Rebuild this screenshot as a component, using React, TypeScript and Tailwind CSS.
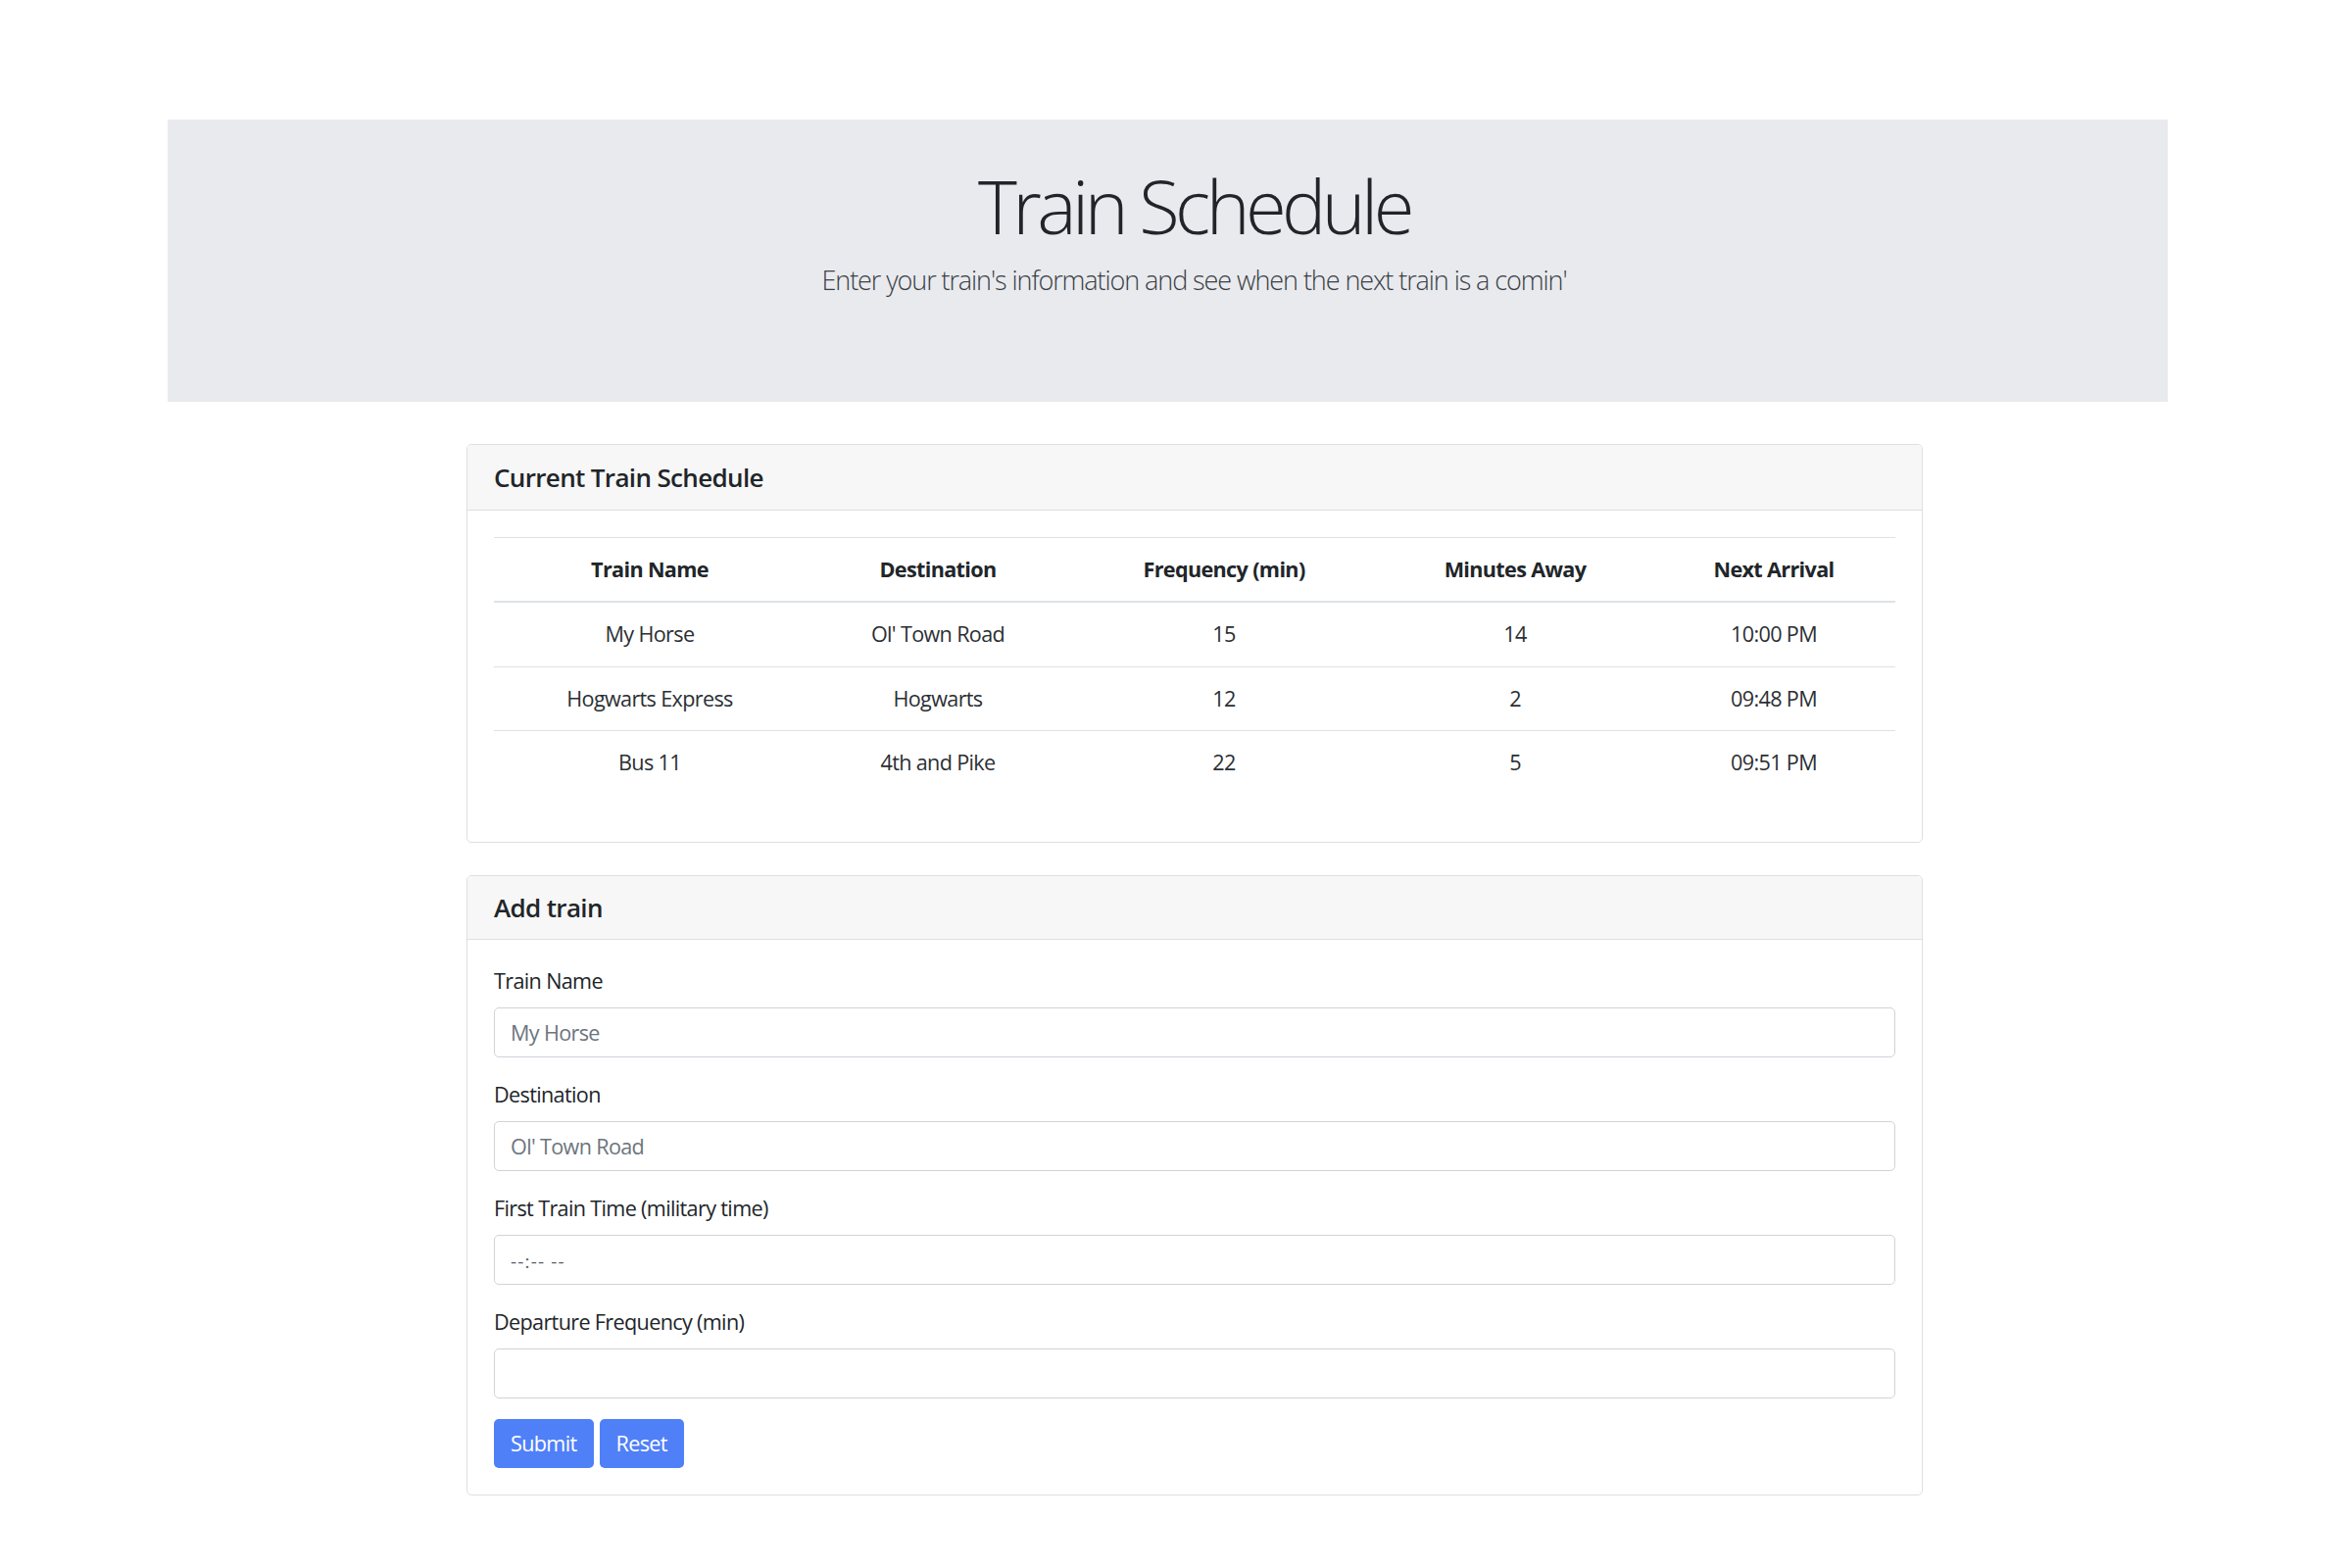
import React from "react";

const rows = [
  { name: "My Horse", dest: "Ol' Town Road", freq: "15", away: "14", next: "10:00 PM" },
  { name: "Hogwarts Express", dest: "Hogwarts", freq: "12", away: "2", next: "09:48 PM" },
  { name: "Bus 11", dest: "4th and Pike", freq: "22", away: "5", next: "09:51 PM" },
];

function Field({ label, placeholder, muted }: { label: string; placeholder?: string; muted?: boolean }) {
  return (
    <div className="mb-[21.6px]">
      <label className="block mb-[10.8px] text-[21.6px] leading-[1.5] tracking-[-0.03em]">{label}</label>
      <input
        type="text"
        placeholder={placeholder}
        className={
          "block w-full h-[51px] px-[16px] rounded-[5px] border border-[#ced4da] bg-white text-[21.6px] text-[#495057] outline-none tracking-[-0.03em] " +
          (muted
            ? "placeholder:text-[#5a5f64] placeholder:text-[19px] placeholder:tracking-[0.06em]"
            : "placeholder:text-[#6c757d]")
        }
      />
    </div>
  );
}

export default function App() {
  return (
    <div className="min-h-[1600px] bg-white pt-[122px] text-[#212529] font-['Open_Sans','Noto_Sans',sans-serif]">
      <div className="ml-[171px] w-[2041px] h-[288px] bg-[#e9eaee] pt-[42px] pl-[54px] text-center">
        <h1 className="text-[76px] leading-[1.2] font-light mb-[11px] tracking-[-0.06em]">Train Schedule</h1>
        <p className="text-[27px] leading-[1.5] font-light text-[#3a3f45] tracking-[-0.04em]">
          Enter your train's information and see when the next train is a comin'
        </p>
      </div>

      <div className="ml-[476px] w-[1486px] mt-[43px]">
        <div className="border border-[#dfdfdf] rounded-[5px] bg-white overflow-hidden">
          <div className="bg-[#f7f7f7] border-b border-[#dfdfdf] px-[27px] py-[17px]">
            <h5 className="text-[26px] leading-[32px] font-semibold tracking-[-0.025em]">Current Train Schedule</h5>
          </div>
          <div className="p-[27px]">
            <table className="w-full table-fixed border-collapse text-center text-[21.6px] leading-[1.5] tracking-[-0.03em] mb-[21.6px]">
              <colgroup>
                <col className="w-[318px]" />
                <col className="w-[270px]" />
                <col className="w-[314px]" />
                <col className="w-[280px]" />
                <col />
              </colgroup>
              <thead>
                <tr className="border-t border-[#dee2e6]">
                  <th className="py-[16px] px-[16px] font-bold border-b-2 border-[#dee2e6]">Train Name</th>
                  <th className="py-[16px] px-[16px] font-bold border-b-2 border-[#dee2e6]">Destination</th>
                  <th className="py-[16px] px-[16px] font-bold border-b-2 border-[#dee2e6]">Frequency (min)</th>
                  <th className="py-[16px] px-[16px] font-bold border-b-2 border-[#dee2e6]">Minutes Away</th>
                  <th className="py-[16px] px-[16px] font-bold border-b-2 border-[#dee2e6]">Next Arrival</th>
                </tr>
              </thead>
              <tbody>
                {rows.map((r, i) => (
                  <tr key={r.name} className={i === 0 ? "" : "border-t border-[#dee2e6]"}>
                    <td className="py-[16px] px-[16px] text-[#2b2f33]">{r.name}</td>
                    <td className="py-[16px] px-[16px] text-[#2b2f33]">{r.dest}</td>
                    <td className="py-[16px] px-[16px] text-[#2b2f33]">{r.freq}</td>
                    <td className="py-[16px] px-[16px] text-[#2b2f33]">{r.away}</td>
                    <td className="py-[16px] px-[16px] text-[#2b2f33]">{r.next}</td>
                  </tr>
                ))}
              </tbody>
            </table>
          </div>
        </div>

        <div className="mt-[33px] border border-[#dfdfdf] rounded-[5px] bg-white overflow-hidden">
          <div className="bg-[#f7f7f7] border-b border-[#dfdfdf] px-[27px] py-[16px]">
            <h5 className="text-[26px] leading-[32px] font-semibold tracking-[-0.025em]">Add train</h5>
          </div>
          <div className="p-[27px] pt-[26px]">
            <Field label="Train Name" placeholder="My Horse" />
            <Field label="Destination" placeholder="Ol' Town Road" />
            <Field label="First Train Time (military time)" placeholder="--:-- --" muted />
            <Field label="Departure Frequency (min)" />
            <div className="flex gap-[6px]">
              <button className="h-[50px] px-[17px] rounded-[5px] bg-[#5080f8] text-white text-[21.6px] tracking-[-0.03em]">Submit</button>
              <button className="h-[50px] px-[17px] rounded-[5px] bg-[#5080f8] text-white text-[21.6px] tracking-[-0.03em]">Reset</button>
            </div>
          </div>
        </div>
      </div>
    </div>
  );
}
